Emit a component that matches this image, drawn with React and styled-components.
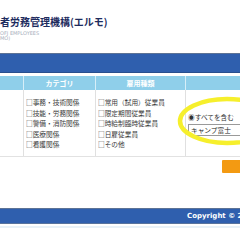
import React from "react";
import styled, { createGlobalStyle } from "styled-components";

const Global = createGlobalStyle`
body {
    margin: 0;
    background: #ffffff;
    font-family: "Noto Sans CJK JP", "Noto Sans", sans-serif;
    overflow: hidden;
}
`

const Page = styled.div`
width: 240px;
height: 240px;
position: relative;
overflow: hidden;
display: flex;
flex-direction: column;
`

const Header = styled.header`
height: 53px;
padding-top: 15px;
box-sizing: border-box;
`

const Title = styled.h1`
margin: 0;
font-size: 10px;
line-height: 14px;
font-weight: 700;
color: #1e2c5e;
white-space: nowrap;
`

const Sub = styled.div`
font-family: "DejaVu Sans", sans-serif;
font-size: 5px;
line-height: 5px;
color: #a8b0bc;
white-space: nowrap;
&:first-of-type {
    margin-top: 2px;
}
`

const NavBar = styled.nav`
height: 18px;
background: #2f5fae;
border-top: 1px solid #5d7396;
border-bottom: 1px solid #294f8e;
`

const Table = styled.div`
margin-top: 3px;
display: grid;
grid-template-columns: 23px 72px 90px 1fr;
border-bottom: 1px solid #e2e2e2;
`

const HeadCell = styled.div`
height: 14px;
background: #8fcfea;
color: #ffffff;
font-size: 7px;
font-weight: 700;
line-height: 14px;
text-align: center;
border-left: ${p => (p.$first ? "none" : "1px solid #d6eef8")};
`

const Cell = styled.div`
height: 66px;
box-sizing: border-box;
padding: 7px 0 0 2px;
border-left: ${p => (p.$first ? "none" : "1px solid #e0e0e0")};
display: flex;
flex-direction: column;
justify-content: ${p => (p.$center ? "center" : "flex-start")};
`

const Item = styled.label`
font-size: 6.7px;
line-height: 10.5px;
color: #3a3a3a;
white-space: nowrap;
`

const Radio = styled.div`
font-size: 6.7px;
line-height: 9px;
color: #333333;
white-space: nowrap;
margin-top: -4px;
`

const TextBox = styled.div`
margin-top: 2px;
height: 10px;
width: 80px;
border: 1px solid #9a9a9a;
background: #ffffff;
font-size: 6.7px;
line-height: 10px;
padding-left: 2px;
color: #222222;
white-space: nowrap;
`

const ButtonRow = styled.div`
display: flex;
justify-content: flex-end;
margin-top: 3px;
`

const SearchBtn = styled.div`
width: 18px;
height: 13px;
background: #f39a12;
border-radius: 1px 0 0 1px;
`

const Footer = styled.footer`
margin-top: 35px;
height: 14px;
background: #2f5fae;
border-top: 1px solid #5d7396;
border-bottom: 1px solid #59739c;
padding-left: 187px;
font-family: "DejaVu Sans", sans-serif;
font-size: 7px;
font-weight: 700;
line-height: 14px;
color: #ffffff;
white-space: nowrap;
overflow: hidden;
`

const FootLine = styled.div`
height: 2px;
margin-top: 2px;
background: #e8f1f8;
`

const Marker = styled.svg`
position: absolute;
left: 0;
top: 0;
pointer-events: none;
`

const categories = ["事務・技術関係", "技能・労務関係", "警備・消防関係", "医療関係", "看護関係"];
const types = ["常用（試用）従業員", "限定期間従業員", "時給制臨時従業員", "日雇従業員", "その他"];

export default function App() {
    return (
        <Page>
            <Global />
            <Header>
                <Title>者労務管理機構(エルモ)</Title>
                <Sub>OFJ EMPLOYEES</Sub>
                <Sub>MO)</Sub>
            </Header>
            <NavBar />
            <Table>
                <HeadCell $first />
                <HeadCell>カテゴリ</HeadCell>
                <HeadCell>雇用種類</HeadCell>
                <HeadCell />
                <Cell $first />
                <Cell>
                    {categories.map(c => <Item key={c}>□{c}</Item>)}
                </Cell>
                <Cell>
                    {types.map(t => <Item key={t}>□{t}</Item>)}
                </Cell>
                <Cell $center>
                    <Radio>◉すべてを含む</Radio>
                    <TextBox>キャンプ富士</TextBox>
                </Cell>
            </Table>
            <ButtonRow>
                <SearchBtn />
            </ButtonRow>
            <Footer>Copyright © 2012 ELMO</Footer>
            <FootLine />
            <Marker width="240" height="240" viewBox="0 0 240 240">
                <ellipse cx="227" cy="121" rx="47" ry="22" fill="none" stroke="#f6ef2c" strokeWidth="4.5" />
            </Marker>
        </Page>
    );
}
